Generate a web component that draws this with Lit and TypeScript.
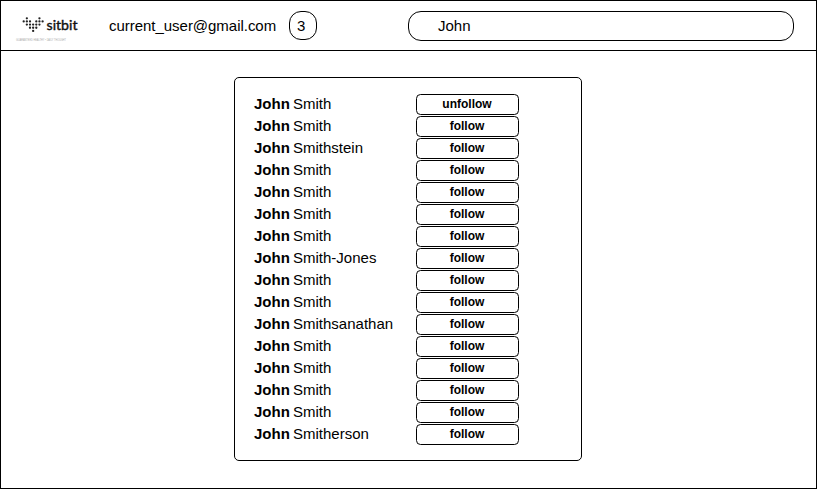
import { LitElement, html, css, svg } from "lit";
import { customElement, property } from "lit/decorators.js";

const SURNAMES = [
  "Smith", "Smith", "Smithstein", "Smith", "Smith", "Smith", "Smith", "Smith-Jones",
  "Smith", "Smith", "Smithsanathan", "Smith", "Smith", "Smith", "Smith", "Smitherson",
];

const people = SURNAMES.map((last, i) => ({ first: "John", last, followed: i === 0 }));

// Each string is a row of the heart; "o" marks a dot.
const HEART = [
  ".o...o.",
  "ooo.ooo",
  ".ooooo.",
  "..ooo..",
  "...o...",
];

@customElement("site-logo")
class SiteLogo extends LitElement {
  static styles = css`
    :host { display: block; width: 70px; height: 36px; }
    svg { display: block; overflow: visible; }
    .name { font: 400 13.5px Lato, sans-serif; fill: #111; stroke: #111; stroke-width: 0.4px; }
    .tagline { font: 2.6px "Liberation Sans", sans-serif; fill: #aaa; }
  `;
  render() {
    return html`<svg width="70" height="36" viewBox="12 10 70 36">
      ${HEART.flatMap((row, y) => [...row].map((c, x) =>
        c === "o" ? svg`<circle cx=${23.7 + x * 3.15} cy=${18.3 + y * 3.15} r="1.15" fill="#222"/>` : null))}
      <text class="name" x="46.5" y="29.8" textLength="31" lengthAdjust="spacingAndGlyphs">sitbit</text>
      <text class="tagline" x="16" y="41.3" textLength="50" lengthAdjust="spacingAndGlyphs">GUARANTEED HEALTHY • DAILY THOUGHT</text>
    </svg>`;
  }
}

@customElement("person-row")
class PersonRow extends LitElement {
  @property() first = "";
  @property() last = "";
  @property({ type: Boolean }) followed = false;
  static styles = css`
    :host { display: grid; grid-template-columns: 162px 103px; height: 22px; }
    .name { line-height: 20px; white-space: nowrap; }
    b { margin-right: -1px; }
    button {
      box-sizing: border-box; height: 21px; padding: 0 1px 0 0; margin: 0;
      border: 1px solid #000; border-radius: 4.5px; background: #fff; color: #000;
      font: bold 12px/17px "Liberation Sans", Arial, sans-serif;
    }
  `;
  render() {
    return html`<span class="name"><b>${this.first}</b> ${this.last}</span>
      <button>${this.followed ? "unfollow" : "follow"}</button>`;
  }
}

@customElement("app-root")
class AppRoot extends LitElement {
  static styles = css`
    :host {
      display: block; box-sizing: border-box; width: 817px; height: 489px;
      border: 1px solid #000; background: #fff; color: #000;
      font: 15px "Liberation Sans", Arial, sans-serif;
    }
    header {
      box-sizing: border-box; display: flex; align-items: flex-start;
      height: 50px; padding: 10px 22px 0 11px; border-bottom: 1px solid #000;
    }
    site-logo { margin-top: -1px; }
    .email { margin-left: 27px; width: 180px; line-height: 30px; letter-spacing: -0.03px; }
    .count, .search {
      box-sizing: border-box; border: 1px solid #000; line-height: 28px;
    }
    .count { width: 28px; height: 29px; border-radius: 12px; padding-left: 7px; }
    .search { margin-left: auto; width: 386px; height: 30px; border-radius: 13px; padding-left: 29px; }
    main {
      box-sizing: border-box; width: 348px; height: 384px; margin: 26px 0 0 233px;
      padding: 16px 19px; border: 1px solid #000; border-radius: 5px;
    }
  `;
  render() {
    return html`
      <header>
        <site-logo></site-logo>
        <span class="email">current_user@gmail.com</span>
        <span class="count">3</span>
        <div class="search">John</div>
      </header>
      <main>
        ${people.map((p) => html`<person-row .first=${p.first} .last=${p.last} .followed=${p.followed}></person-row>`)}
      </main>`;
  }
}
